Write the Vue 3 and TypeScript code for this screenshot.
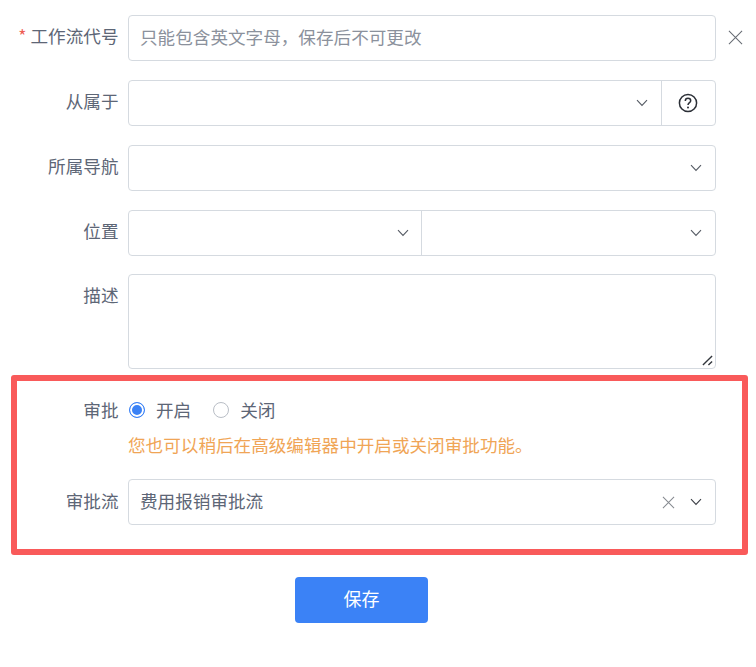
<script setup lang="ts">
interface Row {
  label: string
}
const navRow: Row = { label: '所属导航' }
</script>

<template>
  <div class="page">
    <div class="row">
      <label class="label"><span class="star">*</span>工作流代号</label>
      <div class="control input placeholder">只能包含英文字母，保存后不可更改</div>
      <svg class="close" viewBox="0 0 16 16"><path d="M1 1 15 15M15 1 1 15" /></svg>
    </div>
    <div class="row">
      <label class="label">从属于</label>
      <div class="control input split">
        <div class="cell">
          <svg class="chev" viewBox="0 0 12 8"><path d="M1 1.2 6 6.4 11 1.2" /></svg>
        </div>
        <div class="addon">
          <svg class="help" viewBox="0 0 20 20">
            <circle cx="10" cy="10" r="8.6" />
            <path d="M7.3 7.9C7.3 6.2 8.5 5.2 10 5.2S12.7 6.2 12.7 7.7C12.7 9.6 10 9.8 10 12" />
            <circle class="dot" cx="10" cy="14.5" r="1" />
          </svg>
        </div>
      </div>
    </div>
    <div class="row">
      <label class="label">{{ navRow.label }}</label>
      <div class="control input end">
        <svg class="chev" viewBox="0 0 12 8"><path d="M1 1.2 6 6.4 11 1.2" /></svg>
      </div>
    </div>
    <div class="row">
      <label class="label">位置</label>
      <div class="control input split">
        <div class="cell half">
          <svg class="chev" viewBox="0 0 12 8"><path d="M1 1.2 6 6.4 11 1.2" /></svg>
        </div>
        <div class="cell half">
          <svg class="chev" viewBox="0 0 12 8"><path d="M1 1.2 6 6.4 11 1.2" /></svg>
        </div>
      </div>
    </div>
    <div class="row desc">
      <label class="label top">描述</label>
      <div class="control textarea">
        <svg class="grip" viewBox="0 0 12 12"><path d="M1 11 11 1M7 11 11 7" /></svg>
      </div>
    </div>

    <section class="box">
      <div class="boxrow radios">
        <label class="label">审批</label>
        <div class="radio-group">
          <span class="radio on"></span><span class="rtext">开启</span>
          <span class="radio off"></span><span class="rtext">关闭</span>
        </div>
      </div>
      <div class="hint">您也可以稍后在高级编辑器中开启或关闭审批功能。</div>
      <div class="boxrow flow">
        <label class="label">审批流</label>
        <div class="control input value">
          <span class="grow">费用报销审批流</span>
          <svg class="clear" viewBox="0 0 14 14"><path d="M1 1 13 13M13 1 1 13" /></svg>
          <svg class="chev dark" viewBox="0 0 12 8"><path d="M1 1.2 6 6.4 11 1.2" /></svg>
        </div>
      </div>
    </section>

    <div class="actions">
      <button class="save" type="button">保存</button>
    </div>
  </div>
</template>

<style scoped>
.page {
  width: 756px;
  height: 667px;
  box-sizing: border-box;
  padding-top: 15px;
  background: #fff;
  font-family: "Noto Sans CJK SC", "Noto Sans", sans-serif;
  font-size: 17.6px;
  color: #5d6676;
  overflow: hidden;
}
.row {
  display: flex;
  align-items: center;
  height: 46px;
  margin-bottom: 19px;
  position: relative;
}
.row.desc {
  height: 95px;
  margin-bottom: 6px;
  margin-top: -1px;
  align-items: flex-start;
}
.label {
  flex: none;
  width: 118.5px;
  margin-right: 9.5px;
  text-align: right;
  line-height: 42px;
  height: 46px;
  white-space: nowrap;
}
.label.top {
  line-height: 42px;
}
.star {
  color: #ee5a52;
  margin-right: 4px;
}
.control {
  flex: none;
  width: 588px;
  box-sizing: border-box;
  border: 1px solid #d5dae0;
  border-radius: 4px;
  background: #fff;
}
.input {
  height: 46px;
  display: flex;
  align-items: center;
}
.placeholder {
  padding-left: 11px;
  padding-bottom: 4px;
  color: #8b919c;
}
.close {
  width: 15px;
  height: 15px;
  margin-left: 12px;
  margin-top: -2px;
  fill: none;
  stroke: #666b73;
  stroke-width: 1.1;
}
.split .cell {
  flex: 1;
  height: 100%;
  display: flex;
  align-items: center;
  justify-content: flex-end;
  padding-right: 13px;
}
.split .cell.half {
  flex: none;
  width: 292px;
  box-sizing: border-box;
  padding-right: 12px;
}
.split .cell.half + .cell.half {
  border-left: 1px solid #d5dae0;
  padding-right: 13px;
  flex: 1;
}
.addon {
  flex: none;
  width: 54px;
  height: 100%;
  box-sizing: border-box;
  border-left: 1px solid #d5dae0;
  padding-right: 2px;
  display: flex;
  align-items: center;
  justify-content: center;
}
.help {
  width: 20px;
  height: 20px;
  fill: none;
  stroke: #2b2f36;
  stroke-width: 1.5;
}
.help .dot {
  fill: #2b2f36;
  stroke: none;
}
.end {
  justify-content: flex-end;
  padding-right: 13px;
}
.chev {
  width: 12px;
  height: 8px;
  fill: none;
  stroke: #555b64;
  stroke-width: 1.1;
}
.chev.dark {
  stroke: #3b3f46;
}
.textarea {
  height: 95px;
  position: relative;
}
.grip {
  position: absolute;
  right: 2px;
  bottom: 2px;
  width: 11px;
  height: 11px;
  fill: none;
  stroke: #33373d;
  stroke-width: 1.5;
}
.box {
  width: 737px;
  height: 180px;
  margin-left: 11px;
  box-sizing: border-box;
  border: 6px solid #f95a5a;
  border-radius: 3px;
  padding-top: 12px;
}
.boxrow {
  display: flex;
  align-items: center;
  height: 46px;
}
.boxrow .label {
  width: 101.5px;
}
.boxrow.flow .label {
  line-height: 44px;
}
.radios {
  height: 34px;
}
.radios .label {
  line-height: 34px;
  height: 34px;
}
.radio-group {
  display: flex;
  align-items: center;
  margin-left: 1px;
}
.radio {
  flex: none;
  width: 16px;
  height: 16px;
  box-sizing: border-box;
  border-radius: 50%;
}
.radio.on {
  border: 1px solid #3b82f6;
  background: #3b82f6;
  box-shadow: inset 0 0 0 2px #fff;
}
.radio.off {
  border: 1px solid #b9bec6;
  margin-left: 22px;
}
.rtext {
  margin-left: 11px;
  line-height: 34px;
}
.hint {
  margin-left: 111px;
  margin-top: 1px;
  margin-bottom: 17px;
  height: 34px;
  line-height: 34px;
  color: #f0a556;
  white-space: nowrap;
}
.value {
  padding: 0 13px 0 11px;
}
.grow {
  flex: 1;
  line-height: 42px;
  height: 44px;
}
.clear {
  width: 13px;
  height: 13px;
  margin-right: 15px;
  fill: none;
  stroke: #85898f;
  stroke-width: 1.1;
}
.actions {
  display: flex;
  justify-content: flex-start;
  margin-top: 22px;
  padding-left: 295px;
}
.save {
  width: 133px;
  height: 46px;
  border: none;
  border-radius: 4px;
  background: #3b82f6;
  color: #fff;
  font: inherit;
  font-size: 18px;
  padding: 0 0 4px;
}
</style>
